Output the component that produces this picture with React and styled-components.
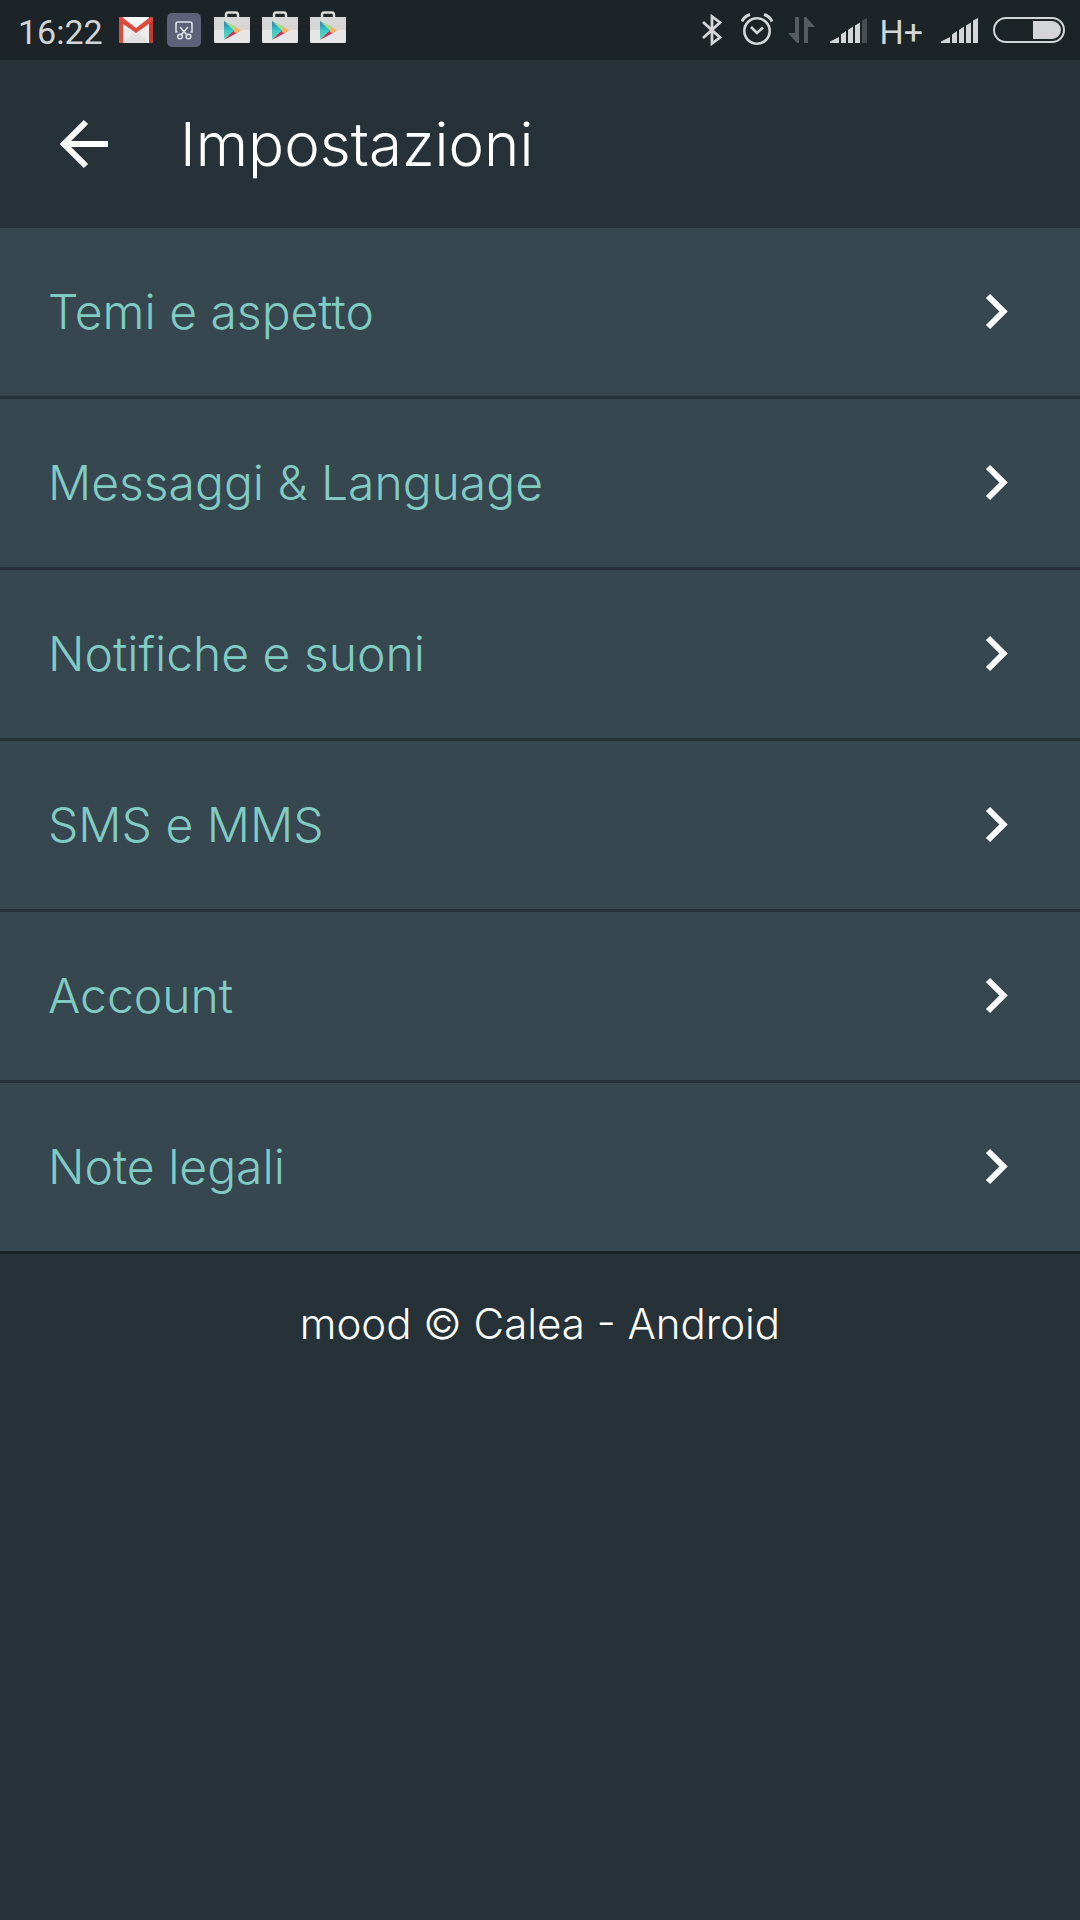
import React from "react";
import styled, { createGlobalStyle } from "styled-components";

const GlobalStyle = createGlobalStyle`
  *, *::before, *::after { box-sizing: border-box; }
  html { background: #263238; }
  body { margin: 0; font-family: Inter, "Liberation Sans", sans-serif; font-weight: 350; color: #fff; }
`;

const Page = styled.div`
  min-height: 100vh;
  background: #263238;
`;

const StatusBar = styled.div`
  display: flex;
  align-items: center;
  justify-content: space-between;
  height: 60px;
  padding: 0 15px 0 18px;
  background: #1c2427;
  color: #d3d5d6;
  font-family: Roboto, "Liberation Sans", sans-serif;
  font-size: 34px;
  line-height: 40px;
  font-weight: 400;
`;

const StatusGroup = styled.div`
  display: flex;
  align-items: center;
  gap: 12px;
`;

const Clock = styled.time`
  padding: 3px 4px 0 0;
`;

const Network = styled.span`
  padding: 3px 6px 0 0;
`;

const Glyph = styled.svg`
  display: block;
  flex: none;
  width: ${(p) => p.$w}px;
  height: ${(p) => p.$h || 60}px;
`;

const Header = styled.header`
  display: flex;
  align-items: center;
  gap: 60px;
  height: 168px;
  padding: 0 48px;
`;

const BackButton = styled.button`
  display: flex;
  align-items: center;
  justify-content: center;
  width: 72px;
  height: 72px;
  padding: 0;
  border: 0;
  background: none;
  color: #fff;
`;

const Title = styled.h1`
  margin: 0;
  font-size: 60px;
  line-height: 72px;
  font-weight: 350;
`;

const List = styled.ul`
  margin: 0;
  padding: 0;
  list-style: none;
`;

const Item = styled.li`
  background: #37474f;
  border-bottom: 3px solid #263238;
  &:last-child { border-bottom-color: #1b2428; }
`;

const ItemLink = styled.a`
  display: flex;
  align-items: center;
  justify-content: space-between;
  height: 168px;
  padding: 0 48px;
  color: #80cbc4;
  font-size: 48px;
  line-height: 60px;
  text-decoration: none;
`;

const Footer = styled.footer`
  padding: 40px 48px;
  font-size: 42px;
  line-height: 60px;
  text-align: center;
`;

const GmailIcon = () => (
  <Glyph $w={36} $h={26} viewBox="0 0 36 26" aria-hidden="true">
    <rect width="34" height="26" rx="2" fill="#ececec" />
    <path d="M4 26L17 14L30 26Z" fill="#e0e0e0" />
    <path d="M4 0H30L17 12Z" fill="#f6f6f6" />
    <path d="M0 2Q0 0 2 0L4 0V26H2Q0 26 0 24Z" fill="#dd4b3e" />
    <path d="M34 2Q34 0 32 0L30 0V26H32Q34 26 34 24Z" fill="#c6392d" />
    <path d="M0 2Q1 -1 4 1L17 11L30 1Q33 -1 34 2V4L17 16L0 4Z" fill="#dd4b3e" />
  </Glyph>
);

const ScissorsIcon = () => (
  <Glyph $w={35} $h={34} viewBox="0 0 35 34" fill="none" aria-hidden="true">
    <rect width="34" height="34" rx="5" fill="#5d6279" />
    <g stroke="#e4e5ea" strokeWidth="1.5">
      <path d="M10.500 19H9V11Q9 9 11 9H23Q25 9 25 11V19H23.500" />
      <path d="M13 14L20 22M21 14L14 22" />
      <circle cx="13" cy="23.500" r="2.300" />
      <circle cx="21.500" cy="23.500" r="2.300" />
    </g>
  </Glyph>
);

const PlayStoreIcon = ({ id }) => (
  <Glyph $w={36} viewBox="0 0 36 60" aria-hidden="true">
    <defs>
      <linearGradient id={id} x1="0" y1="0" x2="0" y2="1">
        <stop offset="0" stopColor="#1b7fae" />
        <stop offset="0.5" stopColor="#3cc8c4" />
        <stop offset="1" stopColor="#5fe3b4" />
      </linearGradient>
    </defs>
    <path d="M12 18V15Q12 12.500 14 12.500H22Q24 12.500 24 15V18" fill="none" stroke="#dcdcdc" strokeWidth="2.400" />
    <path d="M0 17H36V42Q36 43 35 43H1Q0 43 0 42Z" fill="#e6e6e6" />
    <path d="M0 17H36V30H0Z" fill="#d6d6d6" />
    <path d="M10 21L22 27L20 30.500Z" fill="#a5de7c" />
    <path d="M10 40L22 33.500L19 30Z" fill="#c8305f" />
    <path d="M22 27L27 30.500L22 34L19 30.500Z" fill="#fbae62" />
    <path d="M10 21L20 30.500L10 39.500Z" fill={`url(#${id})`} />
  </Glyph>
);

const BluetoothIcon = () => (
  <Glyph $w={27} viewBox="0 0 27 60" fill="none" stroke="#d3d5d6" strokeWidth="2.800" aria-hidden="true">
    <path d="M1 22L18 37.500L10 43.500V16.500L18 22.500L1 38" />
  </Glyph>
);

const AlarmIcon = () => (
  <Glyph $w={35} viewBox="0 0 35 60" fill="none" stroke="#d3d5d6" aria-hidden="true">
    <circle cx="16" cy="31" r="12.700" strokeWidth="2.600" />
    <path d="M10 27L16 33L22 27.500" strokeWidth="2.600" />
    <path d="M1 21.500Q3 16.500 9 14.500M31 21.500Q29 16.500 23 14.500" strokeWidth="3" />
  </Glyph>
);

const DataIcon = () => (
  <Glyph $w={30} viewBox="0 0 30 60" fill="#565c5f" aria-hidden="true">
    <path d="M7 17H11V43H9L0 33H7Z" />
    <path d="M20 43H16V17H18L27 27H20Z" />
  </Glyph>
);

const SignalIcon = ({ dimLast }) => (
  <Glyph $w={37} viewBox="0 0 37 60" fill="#d3d5d6" aria-hidden="true">
    <path d="M0 43V41.500L9 37V43ZM11 43V34.500L16 31V43ZM18 43V30L23 26.500V43ZM25 43V25.500L30 22.500V43Z" />
    <path d="M32 43V20.500L37 18V43Z" fill={dimLast ? "#474d50" : "#d3d5d6"} />
  </Glyph>
);

const BatteryIcon = () => (
  <Glyph $w={75} $h={26} viewBox="-3 0 75 26" aria-hidden="true">
    <rect x="1" y="1" width="70" height="24" rx="12" fill="none" stroke="#d3d5d6" strokeWidth="2" />
    <path d="M40 4H59A9 9 0 0 1 59 22H40Z" fill="#d3d5d6" />
  </Glyph>
);

const BackIcon = () => (
  <Glyph $w={72} $h={72} viewBox="0 0 72 72" fill="none" stroke="currentColor" strokeWidth="6" aria-hidden="true">
    <path d="M60 36H17M38 14L16 36L38 58" />
  </Glyph>
);

const ChevronIcon = () => (
  <Glyph $w={72} $h={72} viewBox="0 0 72 72" fill="none" stroke="#fff" strokeWidth="6" aria-hidden="true">
    <path d="M28 20L43.500 35.500L28 51" />
  </Glyph>
);

const sections = [
  { id: "temi", label: "Temi e aspetto" },
  { id: "messaggi", label: "Messaggi & Language" },
  { id: "notifiche", label: "Notifiche e suoni" },
  { id: "sms", label: "SMS e MMS" },
  { id: "account", label: "Account" },
  { id: "note", label: "Note legali" },
];

export default function App() {
  return (
    <Page>
      <GlobalStyle />
      <StatusBar>
        <StatusGroup>
          <Clock>16:22</Clock>
          <GmailIcon />
          <ScissorsIcon />
          <PlayStoreIcon id="store-a" />
          <PlayStoreIcon id="store-b" />
          <PlayStoreIcon id="store-c" />
        </StatusGroup>
        <StatusGroup>
          <BluetoothIcon />
          <AlarmIcon />
          <DataIcon />
          <SignalIcon dimLast />
          <Network>H+</Network>
          <SignalIcon />
          <BatteryIcon />
        </StatusGroup>
      </StatusBar>
      <Header>
        <BackButton type="button" aria-label="Indietro">
          <BackIcon />
        </BackButton>
        <Title>Impostazioni</Title>
      </Header>
      <main>
        <List>
          {sections.map(({ id, label }) => (
            <Item key={id}>
              <ItemLink href={`#${id}`}>
                {label}
                <ChevronIcon />
              </ItemLink>
            </Item>
          ))}
        </List>
      </main>
      <Footer>mood © Calea - Android</Footer>
    </Page>
  );
}
